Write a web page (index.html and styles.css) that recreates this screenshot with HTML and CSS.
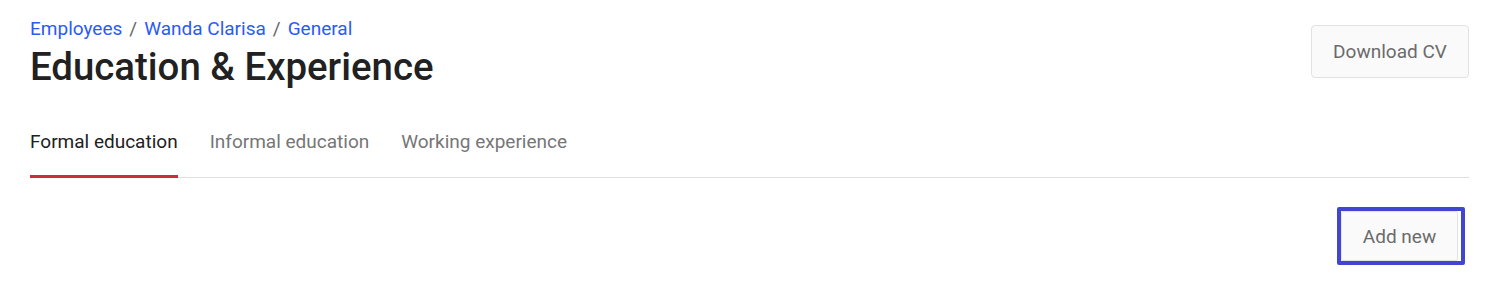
FILE: index.html
```html
<!DOCTYPE html>
<html>
<head>
<meta charset="utf-8">
<link rel="stylesheet" href="styles.css">
</head>
<body>
<div class="page">
  <header class="header">
    <div class="titles">
      <nav class="crumbs"><a>Employees</a><span class="sep">/</span><a>Wanda Clarisa</a><span class="sep">/</span><a>General</a></nav>
      <h1 class="title">Education &amp; Experience</h1>
    </div>
    <button class="btn btn-download">Download CV</button>
  </header>
  <div class="tabs">
    <div class="tab active">Formal education</div>
    <div class="tab">Informal education</div>
    <div class="tab">Working experience</div>
  </div>
  <div class="actions">
    <div class="focus-ring"><button class="btn btn-add">Add new</button></div>
  </div>
</div>
</body>
</html>
```
FILE: styles.css
```css
* { box-sizing: border-box; }
html, body { margin: 0; padding: 0; background: #fff; }
body { font-family: Roboto, "Liberation Sans", sans-serif; }
.page { padding: 0 23px 0 30px; }
.header { display: flex; justify-content: space-between; align-items: flex-start; padding-top: 17px; }
.crumbs { font-size: 19px; line-height: 24px; color: #2a5bf6; }
.crumbs .sep { color: #666; margin: 0 7px; }
.title { margin: 3px 0 0; font-size: 38.4px; font-weight: 500; line-height: 46px; color: #212121; letter-spacing: 0; }
.btn { font-family: Roboto, "Liberation Sans", sans-serif; font-size: 19px; color: #6b6b6b; background: #fafafa; border: 1px solid #e2e2e2; border-radius: 4px; }
.btn-download { margin-top: 8px; width: 158px; height: 53px; }
.tabs { display: flex; gap: 32px; margin-top: 36px; border-bottom: 1px solid #e0e0e0; }
.tab { font-size: 19px; line-height: 24px; color: #767676; padding: 4px 0 21px; border-bottom: 3px solid transparent; margin-bottom: -1px; }
.tab.active { color: #212121; border-bottom-color: #c62f3c; }
.actions { display: flex; justify-content: flex-end; padding-top: 29px; padding-right: 4px; }
.focus-ring { border: 4px solid #4146d2; border-radius: 2px; padding: 0 3px 0 0; background: #fff; }
.btn-add { display: block; width: 117px; height: 50px; border-radius: 2px; }
```
